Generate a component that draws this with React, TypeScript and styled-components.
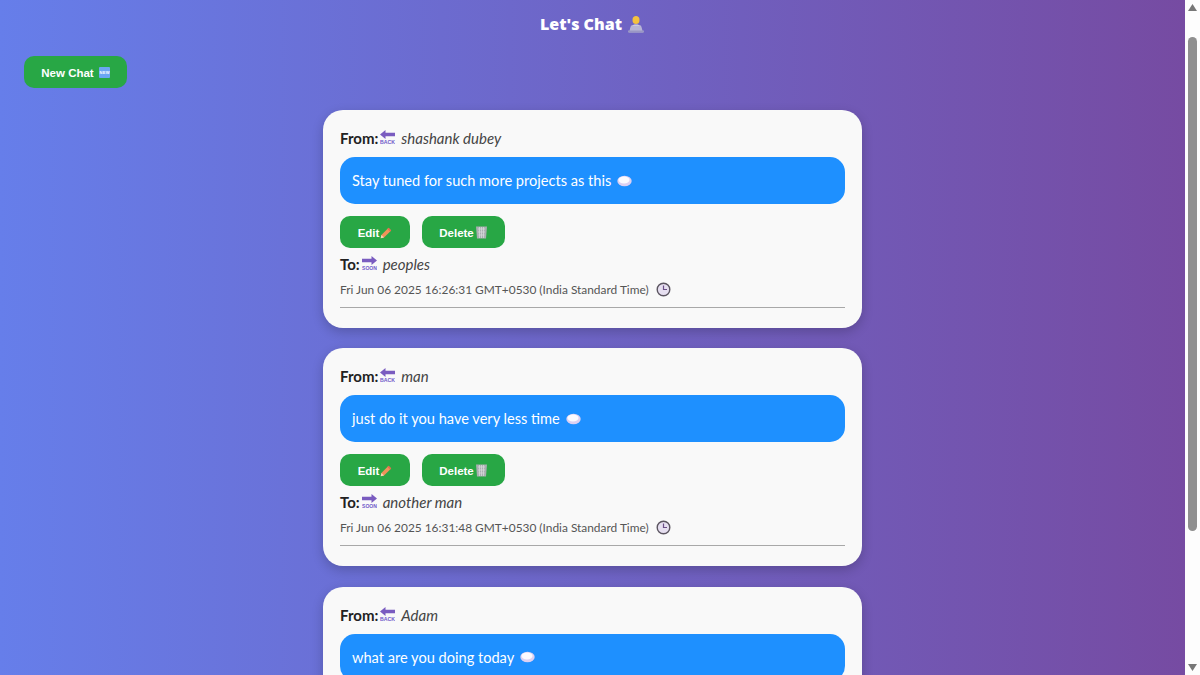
import React from 'react';
import styled, { createGlobalStyle } from 'styled-components';

const BODY_FONT = 'Lato, "Open Sans", sans-serif';
const TITLE_FONT = '"Open Sans", "Noto Sans", sans-serif';
const BUTTON_FONT = '"Liberation Sans", Arial, sans-serif';

const GlobalStyle = createGlobalStyle`
  html, body {
    margin: 0;
    padding: 0;
    height: 100%;
    overflow: hidden;
  }
  * {
    box-sizing: border-box;
  }
`;

const Shell = styled.div`
  display: flex;
  height: 100vh;
  overflow: hidden;
  font-family: ${BODY_FONT};
`;

const Page = styled.main`
  flex: 1;
  min-width: 0;
  overflow: hidden;
  background: linear-gradient(90deg, #667eea, #764ba2);
`;

const Title = styled.h1`
  display: flex;
  align-items: center;
  justify-content: center;
  gap: 5px;
  height: 24px;
  margin: 12px 0 0;
  color: #fff;
  font-family: ${TITLE_FONT};
  font-size: 16px;
  font-weight: 800;
`;

const NewChatButton = styled.button`
  display: flex;
  align-items: center;
  justify-content: center;
  gap: 5px;
  width: 103px;
  height: 32px;
  margin: 20px 0 22px 24px;
  padding: 1px 0 0;
  border: none;
  border-radius: 10px;
  background: #28a745;
  color: #fff;
  font-family: ${BUTTON_FONT};
  font-size: 11.5px;
  font-weight: 700;
`;

const ChatList = styled.section`
  display: flex;
  flex-direction: column;
  align-items: center;
  gap: 20.8px;
`;

const Card = styled.article`
  flex: none;
  width: 539px;
  padding: 16px 17px 19.5px;
  border-radius: 20px;
  background: #f9f9f9;
  box-shadow: 0 4px 12px rgba(0, 0, 0, 0.2);
`;

const PersonRow = styled.div`
  display: flex;
  align-items: center;
  height: 24px;
  color: #333;
  font-size: 15px;
`;

const Label = styled.strong`
  color: #222;
  font-weight: 700;
  margin-right: 2px;
`;

const Name = styled.em`
  margin-left: 6px;
  color: #444;
  font-style: italic;
`;

const Bubble = styled.p`
  display: flex;
  align-items: center;
  gap: 6px;
  height: 47px;
  margin: 7px 0 12px;
  padding: 0 12px;
  border-radius: 15px;
  background: #1e90ff;
  color: #fff;
  font-size: 14.6px;
`;

const Actions = styled.div`
  display: flex;
  gap: 12px;
  margin-bottom: 3.5px;
`;

const ActionButton = styled.button<{ $width: number }>`
  display: flex;
  align-items: center;
  justify-content: center;
  gap: 1px;
  width: ${({ $width }) => $width}px;
  height: 32px;
  padding: 1px 0 0;
  border: none;
  border-radius: 10px;
  background: #28a745;
  color: #fff;
  font-family: ${BUTTON_FONT};
  font-size: 11.5px;
  font-weight: 700;
`;

const DateRow = styled.div`
  display: flex;
  align-items: center;
  gap: 7px;
  height: 18px;
  margin-top: 5px;
  color: #555;
  font-size: 11.9px;
`;

const Divider = styled.hr`
  height: 1px;
  margin: 8.5px 0 0;
  border: none;
  background: #a8a8a8;
`;

const Scrollbar = styled.aside`
  flex: none;
  display: flex;
  flex-direction: column;
  align-items: center;
  width: 15px;
  height: 100%;
  padding: 4px 0;
  background: #fdfdfd;
`;

const ScrollThumb = styled.div`
  width: 9px;
  height: 494px;
  margin-top: 26px;
  margin-bottom: auto;
  border-radius: 5px;
  background: #8f8f8f;
`;

const ArrowLabel = styled.text`
  font-family: ${BUTTON_FONT};
  font-size: 5.5px;
  font-weight: 700;
  fill: #6f58c9;
`;

const BackIcon = () => (
  <svg width="15" height="16" viewBox="0 0 15 16">
    <path d="M0 4.5 5.5 0v2.800H15v3.400H5.500V9z" fill="#7a5cc0" />
    <ArrowLabel x="0" y="14" textLength="15" lengthAdjust="spacingAndGlyphs">BACK</ArrowLabel>
  </svg>
);

const SoonIcon = () => (
  <svg width="15" height="16" viewBox="0 0 15 16">
    <path d="M15 4.5 9.500 0v2.800H0v3.400h9.500V9z" fill="#7a5cc0" />
    <ArrowLabel x="0" y="14" textLength="15" lengthAdjust="spacingAndGlyphs">SOON</ArrowLabel>
  </svg>
);

const ThoughtIcon = () => (
  <svg width="15" height="12" viewBox="0 0 15 12">
    <ellipse cx="7.5" cy="6" rx="7.2" ry="5.2" fill="#dcd0f2" />
    <ellipse cx="7" cy="5" rx="5.5" ry="3.4" fill="#fbfaff" />
  </svg>
);

const PencilIcon = () => (
  <svg width="12" height="12" viewBox="0 0 12 12">
    <path d="M8.6.8 11.2 3.4 4 10.6.7 11.3 1.4 8z" fill="#f0935a" />
    <path d="M8.6.8 11.2 3.4 10 4.6 7.4 2z" fill="#e8694f" />
    <path d="M1.4 8 4 10.6.7 11.3z" fill="#f7d8b8" />
  </svg>
);

const TrashIcon = () => (
  <svg width="13" height="13" viewBox="0 0 13 13">
    <path d="M1 .5h11L11 12.5H2z" fill="#a9aeb0" />
    <path d="M3 3h7M3 6h7M3.5 9h6M4.5 1v11M6.5 1v11M8.5 1v11" stroke="#d5d8da" strokeWidth="0.8" />
  </svg>
);

const ClockIcon = () => (
  <svg width="15" height="15" viewBox="0 0 15 15">
    <circle cx="7.5" cy="7.5" r="6.3" fill="#e6dff0" stroke="#5b5560" strokeWidth="1.4" />
    <path d="M7.5 3.500v4h3.500" fill="none" stroke="#6a4e86" strokeWidth="1.2" />
  </svg>
);

const NewIcon = () => (
  <svg width="11" height="11" viewBox="0 0 11 11">
    <rect width="11" height="11" rx="1" fill="#6ba6f2" />
    <text x="0.5" y="7" fontSize="4" fontWeight="700" fontFamily={BUTTON_FONT} fill="#fff" textLength="10">NEW</text>
  </svg>
);

const CoderIcon = () => (
  <svg width="18" height="18" viewBox="0 0 18 18">
    <path d="M5.500 5c0 3 1.500 4 3.500 4s3.500-1 3.500-4-1.500-4-3.500-4-3.500 1-3.500 4z" fill="#f5c23e" />
    <path d="M3.500 15c0-4 2-5.500 5.500-5.500s5.500 1.500 5.500 5.500z" fill="#dfe0e6" />
    <path d="M4 10.500h10l2 7H2z" fill="#b7b4d6" />
    <rect x="1" y="15.500" width="16" height="2" fill="#9a97c4" />
  </svg>
);

const ScrollArrow = ({ down }: { down?: boolean }) => (
  <svg width="9" height="7" viewBox="0 0 9 7">
    <path d={down ? 'M0 0h9L4.500 7z' : 'M0 7h9L4.500 0z'} fill="#777" />
  </svg>
);

interface Chat {
  id: number;
  from: string;
  message: string;
  to?: string;
  date?: string;
}

// the third chat runs off the bottom of the window, only its top part is known
const chats: Chat[] = [
  { id: 1, from: 'shashank dubey', message: 'Stay tuned for such more projects as this', to: 'peoples', date: 'Fri Jun 06 2025 16:26:31 GMT+0530 (India Standard Time)' },
  { id: 2, from: 'man', message: 'just do it you have very less time', to: 'another man', date: 'Fri Jun 06 2025 16:31:48 GMT+0530 (India Standard Time)' },
  { id: 3, from: 'Adam', message: 'what are you doing today' },
];

export default function App() {
  return (
    <Shell>
      <GlobalStyle />
      <Page>
        <Title>Let's Chat <CoderIcon /></Title>
        <NewChatButton>New Chat <NewIcon /></NewChatButton>
        <ChatList>
          {chats.map((chat) => (
            <Card key={chat.id}>
              <PersonRow>
                <Label>From:</Label>
                <BackIcon />
                <Name>{chat.from}</Name>
              </PersonRow>
              <Bubble>
                {chat.message} <ThoughtIcon />
              </Bubble>
              {chat.to && (
                <>
                  <Actions>
                    <ActionButton $width={70}>Edit <PencilIcon /></ActionButton>
                    <ActionButton $width={83}>Delete <TrashIcon /></ActionButton>
                  </Actions>
                  <PersonRow>
                    <Label>To:</Label>
                    <SoonIcon />
                    <Name>{chat.to}</Name>
                  </PersonRow>
                  <DateRow>
                    {chat.date} <ClockIcon />
                  </DateRow>
                  <Divider />
                </>
              )}
            </Card>
          ))}
        </ChatList>
      </Page>
      <Scrollbar>
        <ScrollArrow />
        <ScrollThumb />
        <ScrollArrow down />
      </Scrollbar>
    </Shell>
  );
}
